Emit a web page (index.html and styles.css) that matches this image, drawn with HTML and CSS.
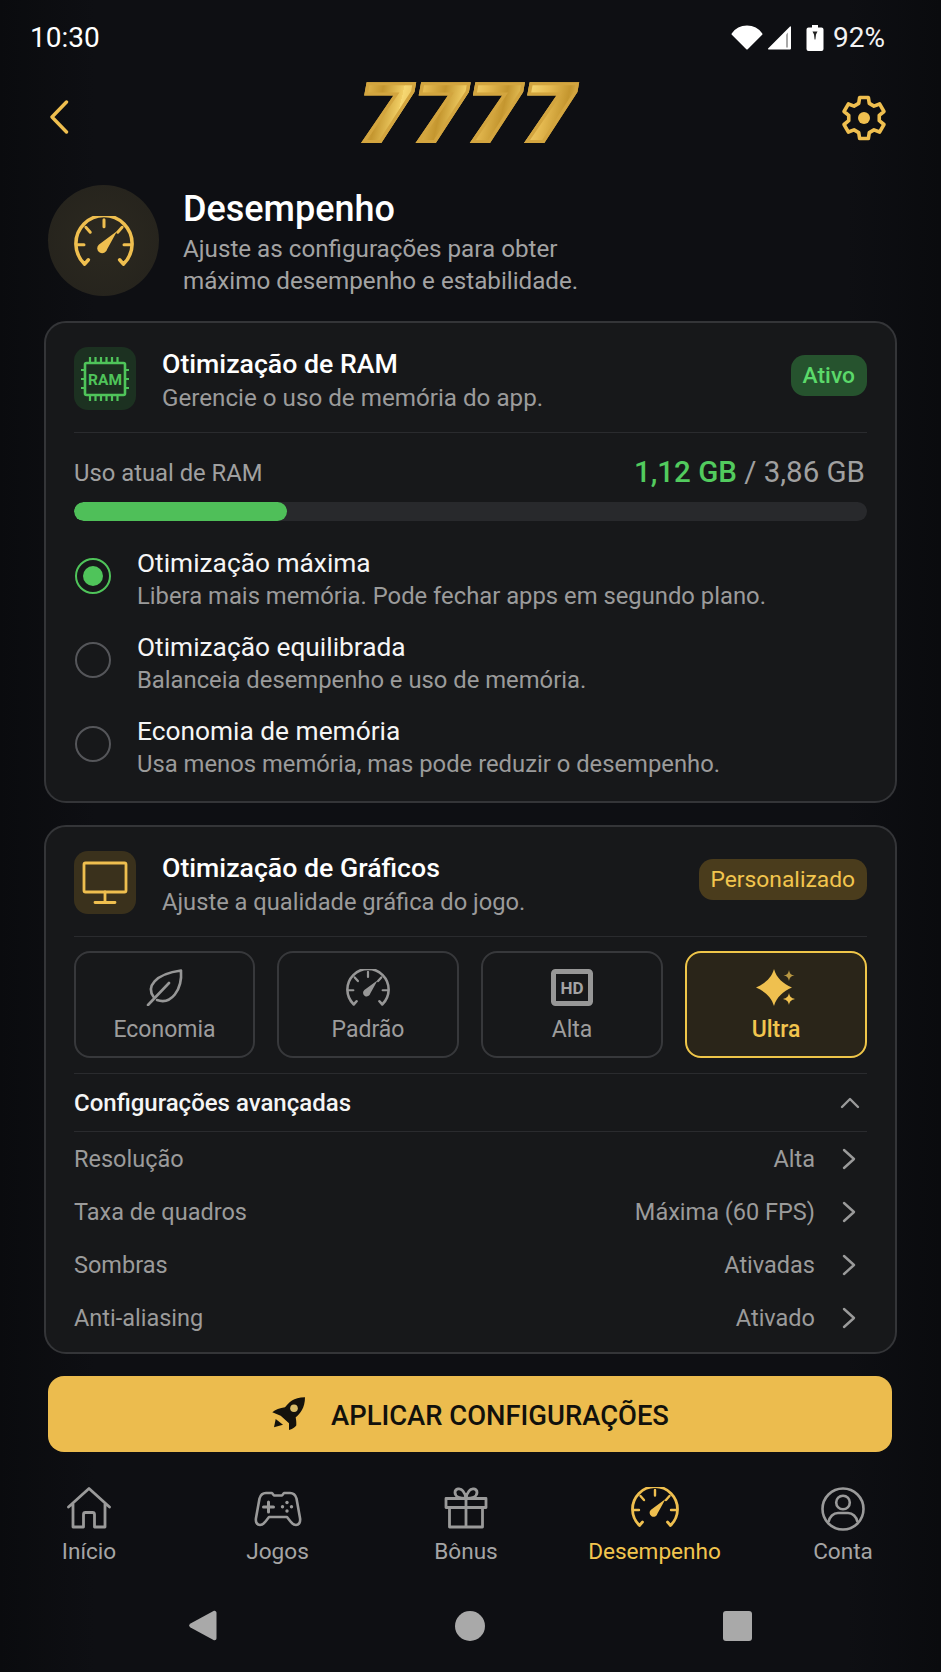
FILE: index.html
```html
<!DOCTYPE html>
<html lang="pt">
<head>
<meta charset="utf-8">
<title>Desempenho</title>
<link rel="stylesheet" href="styles.css">
</head>
<body>
<svg class="defs" width="0" height="0" aria-hidden="true">
  <defs>
    <symbol id="gauge" viewBox="0 0 48 40">
      <path d="M8.5 38.5 11.5 35M39.5 38.5 36.5 35M8.5 38.5A22.5 22.5 0 1 1 39.5 38.5" fill="none" stroke="currentColor" stroke-width="2.8" stroke-linecap="round" stroke-linejoin="round"/>
      <path d="M24 3v5.500M2.500 23H8M40 23h5.500M9.500 9l3.500 4M38.500 9 35 13" fill="none" stroke="currentColor" stroke-width="2.400" stroke-linecap="round"/>
      <path d="M34.500 12 26.500 26.500a4 4 0 1 1-6.500-3.800z" fill="currentColor"/>
    </symbol>
    <symbol id="chev" viewBox="0 0 16 22">
      <path d="M3 2l10 9-10 9" fill="none" stroke="currentColor" stroke-width="2.400" stroke-linecap="round" stroke-linejoin="round"/>
    </symbol>
  </defs>
</svg>
<main class="page">
  <header class="status">
    <span class="time">10:30</span>
    <div class="status-right">
      <svg class="i-wifi" viewBox="0 0 32 25"><path d="M1.500 9C5 4 10 1.500 16 1.500S27 4 30.500 9L16 23.500z" fill="#fff" stroke="#fff" stroke-width="2" stroke-linejoin="round"/></svg>
      <svg class="i-signal" viewBox="0 0 24 25"><path d="M23 1.500a.6.6 0 0 1 1 .5v21.500a1 1 0 0 1-1 1H1.500a.6.6 0 0 1-.4-1z" fill="#fff"/><path d="M19 9.500l2-2v15h-2z" fill="#a8a8a8"/></svg>
      <svg class="i-batt" viewBox="0 0 18 26"><path d="M6 0h6v2.500h3.500A2 2 0 0 1 17.500 4.500V24a2 2 0 0 1-2 2h-13a2 2 0 0 1-2-2V4.500a2 2 0 0 1 2-2H6z" fill="#fff"/><path d="M6.500 6.500h5L10 9.500l-.6 5h-.8L8 9.500z" fill="#222"/></svg>
      <span class="pct">92%</span>
    </div>
  </header>

  <div class="topbar">
    <svg class="i-back" viewBox="0 0 20 34"><path d="M17.500 2 3 17l14.500 15" fill="none" stroke="currentColor" stroke-width="3.400" stroke-linecap="round" stroke-linejoin="round"/></svg>
    <span class="logo">7777</span>
    <svg class="i-gear" viewBox="0 0 48 48"><path d="M19.630 3.460H28.370L29.300 9.430 33.960 12.130 39.600 9.950 43.970 17.510 39.260 21.310V26.690L43.970 30.490 39.600 38.050 33.960 35.870 29.300 38.570 28.370 44.540H19.630L18.700 38.570 14.040 35.870 8.400 38.050 4.030 30.490 8.740 26.690V21.310L4.030 17.510 8.400 9.950 14.040 12.130 18.700 9.430z" fill="none" stroke="currentColor" stroke-width="3.600" stroke-linejoin="round"/><circle cx="24" cy="24" r="6" fill="currentColor"/></svg>
  </div>

  <section class="hero">
    <div class="hero-icon"><svg class="i-hero"><use href="#gauge"/></svg></div>
    <div class="hero-text">
      <h1>Desempenho</h1>
      <p>Ajuste as configurações para obter<br>máximo desempenho e estabilidade.</p>
    </div>
  </section>

  <section class="card card-ram">
    <div class="card-head">
      <div class="tile tile-green">
        <svg class="i-ram" viewBox="0 0 50 50">
          <rect x="5" y="9" width="40" height="32" rx="1.500" fill="#1c2f20" stroke="currentColor" stroke-width="2.600"/>
          <path d="M10 9V3M15.500 9V3M21 9V3M26.500 9V3M32 9V3M37.500 9V3M10 47v-6M15.500 47v-6M21 47v-6M26.500 47v-6M32 47v-6M37.500 47v-6M5 16H1M5 25H1M5 34H1M49 16h-4M49 25h-4M49 34h-4" stroke="currentColor" stroke-width="2.200" fill="none"/>
          <text x="25" y="31" text-anchor="middle" class="ram-text">RAM</text>
        </svg>
      </div>
      <div class="head-text">
        <h2>Otimização de RAM</h2>
        <p>Gerencie o uso de memória do app.</p>
      </div>
      <span class="badge badge-green">Ativo</span>
    </div>
    <div class="divider"></div>
    <div class="usage">
      <span class="usage-label">Uso atual de RAM</span>
      <span class="usage-val"><b>1,12 GB</b> / 3,86 GB</span>
    </div>
    <div class="bar"><div class="bar-fill"></div></div>
    <div class="options">
      <div class="option">
        <span class="radio radio-on"><span class="radio-dot"></span></span>
        <div><h3>Otimização máxima</h3><p>Libera mais memória. Pode fechar apps em segundo plano.</p></div>
      </div>
      <div class="option">
        <span class="radio"></span>
        <div><h3>Otimização equilibrada</h3><p>Balanceia desempenho e uso de memória.</p></div>
      </div>
      <div class="option">
        <span class="radio"></span>
        <div><h3>Economia de memória</h3><p>Usa menos memória, mas pode reduzir o desempenho.</p></div>
      </div>
    </div>
  </section>

  <section class="card card-gfx">
    <div class="card-head">
      <div class="tile tile-gold">
        <svg class="i-monitor" viewBox="0 0 46 44"><rect x="2" y="2" width="42" height="29" rx="1.500" fill="none" stroke="currentColor" stroke-width="2.800"/><path d="M23 31v9M13 41.500h20" fill="none" stroke="currentColor" stroke-width="2.800" stroke-linecap="round"/></svg>
      </div>
      <div class="head-text">
        <h2>Otimização de Gráficos</h2>
        <p>Ajuste a qualidade gráfica do jogo.</p>
      </div>
      <span class="badge badge-gold">Personalizado</span>
    </div>
    <div class="divider"></div>
    <div class="modes">
      <div class="mode">
        <svg class="i-mode" viewBox="0 0 44 37"><path d="M11 28.500C2.500 18 12 5 38 1.500 39.500 21 28 36 14 31" fill="none" stroke="currentColor" stroke-width="2.600" stroke-linejoin="round" stroke-linecap="round"/><path d="M5 36 26 14" fill="none" stroke="currentColor" stroke-width="2.600" stroke-linecap="round"/></svg>
        <span>Economia</span>
      </div>
      <div class="mode">
        <svg class="i-mode"><use href="#gauge"/></svg>
        <span>Padrão</span>
      </div>
      <div class="mode">
        <svg class="i-mode" viewBox="0 0 44 37"><rect x="3.500" y="2.500" width="37" height="32" rx="2" fill="none" stroke="currentColor" stroke-width="5"/><text x="22" y="24.500" text-anchor="middle" class="hd-text">HD</text></svg>
        <span>Alta</span>
      </div>
      <div class="mode mode-on">
        <svg class="i-mode" viewBox="-2 0 44 37"><path d="M18 0C20.500 9 27 14.500 36 18.500 27 22.500 20.500 28 18 37 15.500 28 9 22.500 0 18.500 9 14.500 15.500 9 18 0z" fill="currentColor"/><path d="M33 1c.7 3.500 2 5 5.500 5.500C35 7 33.700 8.500 33 12c-.7-3.500-2-5-5.500-5.500C31 6 32.300 4.500 33 1z" fill="#b89742"/><path d="M33 24c.7 3.500 2 5 6 6-4 1-5.300 2.500-6 6-.7-3.500-2-5-6-6 4-1 5.300-2.500 6-6z" fill="currentColor"/></svg>
        <span>Ultra</span>
      </div>
    </div>
    <div class="divider divider-modes"></div>
    <div class="adv-head">
      <span>Configurações avançadas</span>
      <svg class="i-up" viewBox="0 0 20 12"><path d="M2 10l8-8 8 8" fill="none" stroke="currentColor" stroke-width="2.400" stroke-linecap="round" stroke-linejoin="round"/></svg>
    </div>
    <div class="divider divider-adv"></div>
    <div class="row"><span class="row-key">Resolução</span><span class="row-val">Alta</span><svg class="i-chev"><use href="#chev"/></svg></div>
    <div class="row"><span class="row-key">Taxa de quadros</span><span class="row-val">Máxima (60 FPS)</span><svg class="i-chev"><use href="#chev"/></svg></div>
    <div class="row"><span class="row-key">Sombras</span><span class="row-val">Ativadas</span><svg class="i-chev"><use href="#chev"/></svg></div>
    <div class="row"><span class="row-key">Anti-aliasing</span><span class="row-val">Ativado</span><svg class="i-chev"><use href="#chev"/></svg></div>
  </section>

  <button class="apply">
    <svg class="i-rocket" viewBox="0 0 36 36">
      <path d="M34 1.300C28 1.500 24 2.500 21 4.500 18 6.500 16 9 14 11.300 9 12 4 13.500 1.300 16.300L9.700 19.700 18 27.300V34C22 33 25.500 30 25.300 29 25.500 26 25 23.500 24.700 21.300 29 18 34 12 34 1.300z" fill="#14120c"/>
      <circle cx="23" cy="12.300" r="3.800" fill="#d8bc68"/>
      <path d="M4.700 23 12 28.700 3 31.300z" fill="#14120c"/>
    </svg>
    <span>APLICAR CONFIGURAÇÕES</span>
  </button>

  <nav class="tabs">
    <div class="tab">
      <div class="tab-icon"><svg class="i-home" viewBox="0 0 44 42"><path d="M1.500 20 22 1.500 42.500 20M6 17v23h10.500V27.500a2 2 0 0 1 2-2h7a2 2 0 0 1 2 2V40H38V17" fill="none" stroke="currentColor" stroke-width="2.800" stroke-linejoin="round" stroke-linecap="round"/></svg></div>
      <span>Início</span>
    </div>
    <div class="tab">
      <div class="tab-icon"><svg class="i-pad" viewBox="0 0 48 36"><path d="M12 2h6l2 2.500h8L30 2h6c3.500 0 5.500 2 6.500 5.500L46 27c.7 4-1 7-4 7-2.500 0-4-1.500-5.500-3.500L33 26H15l-3.500 4.500C10 32.500 8.500 34 6 34c-3 0-4.700-3-4-7L5.500 7.500C6.500 4 8.500 2 12 2z" fill="none" stroke="currentColor" stroke-width="2.600" stroke-linejoin="round"/><path d="M14.500 11v10M9.500 16h10" stroke="currentColor" stroke-width="3" stroke-linecap="round"/><circle cx="33" cy="11.500" r="1.700" fill="currentColor"/><circle cx="33" cy="20" r="1.700" fill="currentColor"/><circle cx="28.500" cy="15.700" r="1.700" fill="currentColor"/><circle cx="37.500" cy="15.700" r="1.700" fill="currentColor"/></svg></div>
      <span>Jogos</span>
    </div>
    <div class="tab">
      <div class="tab-icon"><svg class="i-gift" viewBox="0 0 44 42"><path d="M2 11.500h40v9H2zM5.500 20.500V40h33V20.500M22 11.500V40M22 11.500C16 11.500 11 9.500 11 5.500c0-4 5.500-5 8 -1.500 1.500 2 3 5 3 7.500zM22 11.500c6 0 11-2 11-6 0-4-5.500-5-8-1.500-1.500 2-3 5-3 7.500z" fill="none" stroke="currentColor" stroke-width="2.800" stroke-linejoin="round"/></svg></div>
      <span>Bônus</span>
    </div>
    <div class="tab tab-on">
      <div class="tab-icon"><svg class="i-gauge-tab"><use href="#gauge"/></svg></div>
      <span>Desempenho</span>
    </div>
    <div class="tab">
      <div class="tab-icon"><svg class="i-user" viewBox="0 0 44 44"><circle cx="22" cy="22" r="20.500" fill="none" stroke="currentColor" stroke-width="2.600"/><circle cx="22" cy="15.500" r="6.800" fill="none" stroke="currentColor" stroke-width="2.600"/><path d="M7.500 35c1-5.500 5-9 9.500-9h10c4.500 0 8.500 3.500 9.500 9" fill="none" stroke="currentColor" stroke-width="2.600"/></svg></div>
      <span>Conta</span>
    </div>
  </nav>

  <div class="sysnav">
    <svg class="i-sys-back" viewBox="0 0 28 31"><path d="M1.500 13.500 24.500 1c1.500-.8 3 .2 3 2v25c0 1.800-1.500 2.800-3 2L1.500 17.500c-1.800-1-1.800-3 0-4z" fill="#a9a9a9"/></svg>
    <span class="sys-circle"></span>
    <span class="sys-square"></span>
  </div>
</main>
</body>
</html>
```

FILE: styles.css
```css
* { box-sizing: border-box; }
html, body { margin: 0; padding: 0; background: #0d0e12; }
body { font-family: Roboto, "Liberation Sans", sans-serif; color: #fff; }
h1, h2, h3, p { margin: 0; font-weight: inherit; }
.defs { display: block; height: 0; }
svg { display: block; flex: none; }

.page {
  width: 941px;
  height: 1672px;
  overflow: hidden;
  display: flex;
  flex-direction: column;
  background: linear-gradient(90deg, #0a0b0e 0, #0e0f13 10%, #0e0f13 90%, #0a0b0e 100%);
}

/* status bar */
.status { height: 74px; flex: none; display: flex; align-items: center; justify-content: space-between; padding: 1px 56px 0 30px; }
.time { font-size: 28px; color: #fff; }
.status-right { display: flex; align-items: center; }
.i-wifi { width: 32px; height: 25px; }
.i-signal { width: 24px; height: 25px; margin-left: 4px; }
.i-batt { width: 18px; height: 26px; margin-left: 15px; }
.pct { font-size: 28px; margin-left: 9px; color: #f2f2f2; }

/* top bar */
.topbar { height: 76px; flex: none; display: flex; align-items: center; padding: 0 53px 0 49px; color: #efbf4f; }
.i-back { width: 20px; height: 34px; margin-top: 10px; }
.i-gear { width: 48px; height: 48px; margin-top: 12px; }
.logo {
  flex: 1;
  text-align: center;
  font-size: 82px;
  line-height: 78px;
  font-weight: 900;
  font-style: italic;
  letter-spacing: 2px;
  transform: translate(14px, 2px) scaleX(1.13);
  background: repeating-linear-gradient(102deg, #f6d873 0, #e6bb52 18px, #c4962f 36px, #f0cd64 54px);
  -webkit-background-clip: text;
  background-clip: text;
  color: transparent;
  -webkit-text-stroke: 3px #d3a53f;
}

/* hero */
.hero { flex: none; height: 111px; margin-top: 35px; padding-left: 48px; display: flex; align-items: center; gap: 24px; }
.hero-icon { width: 111px; height: 111px; border-radius: 50%; background: radial-gradient(circle, #2c2920 0, #24221c 100%); display: flex; align-items: center; justify-content: center; }
.i-hero { width: 60px; height: 50px; color: #efbf4f; }
h1 { font-size: 36px; line-height: 42px; font-weight: 500; color: #fff; margin-top: 3px; }
.hero-text p { font-size: 24.200px; line-height: 32px; color: #a3a3a3; margin-top: 3px; }

/* cards */
.card { flex: none; margin: 0 44px; background: #17181a; border: 2px solid #343538; border-radius: 22px; padding: 24px 28px 0; }
.card-ram { margin-top: 25px; height: 482px; }
.card-gfx { margin-top: 22px; height: 529px; }
.card-head { height: 63px; display: flex; align-items: flex-start; }
.tile { width: 62px; height: 63px; border-radius: 14px; display: flex; align-items: center; justify-content: center; flex: none; }
.tile-green { background: #1c3121; color: #4fc45a; }
.tile-gold { background: #3a311c; color: #efbf4f; }
.i-ram { width: 50px; height: 50px; }
.ram-text { font-family: Roboto, sans-serif; font-size: 15.500px; font-weight: 700; fill: #4fc45a; }
.i-monitor { width: 46px; height: 44px; }
.head-text { flex: 1; margin-left: 26px; }
h2 { font-size: 26.700px; line-height: 32px; font-weight: 500; color: #fff; margin-top: 1px; }
.head-text p { font-size: 24.200px; line-height: 36px; color: #9b9b9b; }
.card-gfx .head-text p { font-size: 23.700px; }
.badge { height: 41px; display: flex; align-items: center; padding: 0 12px; border-radius: 14px; font-size: 22.800px; margin-top: 8px; }
.badge-green { background: #26532e; color: #5bd96a; font-weight: 500; }
.badge-gold { background: #4a3c1c; color: #f2c54e; }
.divider { height: 1px; background: #2a2b2e; margin-top: 22px; }
.divider-adv { margin-top: 0; }

/* usage */
.usage { height: 34px; margin-top: 22px; display: flex; align-items: center; justify-content: space-between; }
.usage-label { font-size: 23.800px; color: #a0a0a0; padding-top: 1px; }
.usage-val { font-size: 29.500px; color: #a0a0a0; padding-right: 2px; }
.usage-val b { font-weight: 500; color: #52cb5e; }
.bar { height: 19px; margin-top: 13px; border-radius: 10px; background: #28292c; overflow: hidden; }
.bar-fill { width: 213px; height: 100%; border-radius: 10px; background: #4fbf59; }

/* options */
.options { margin-top: 26px; }
.option { height: 84px; display: flex; align-items: flex-start; gap: 26px; }
.option h3 { font-size: 26.300px; line-height: 33px; color: #f5f5f5; }
.option p { font-size: 23.800px; line-height: 33px; color: #9b9b9b; }
.radio { flex: none; width: 36px; height: 36px; margin-top: 11px; margin-left: 1px; border-radius: 50%; border: 2.500px solid #55565a; display: flex; align-items: center; justify-content: center; }
.radio-on { border-color: #4fc45a; }
.radio-dot { width: 20px; height: 20px; border-radius: 50%; background: #4fc45a; }

/* modes */
.modes { margin-top: 14px; height: 107px; display: grid; grid-template-columns: 181px 182px 182px 182px; gap: 22px; }
.mode { border: 2px solid #37383b; border-radius: 16px; display: flex; flex-direction: column; align-items: center; color: #979797; padding-top: 16px; }
.mode span { font-size: 23px; line-height: 28px; margin-top: 10px; color: #9d9d9d; }
.i-mode { width: 44px; height: 37px; }
.mode-on { border-color: #efc649; background: #2a2519; color: #efc04f; }
.mode-on span { color: #f2c54e; font-weight: 500; }
.hd-text { font-family: Roboto, sans-serif; font-size: 17px; font-weight: 700; fill: #a3a3a3; }
.divider-modes { margin-top: 15px; }

/* advanced */
.adv-head { height: 57px; display: flex; align-items: center; justify-content: space-between; font-size: 24px; font-weight: 500; color: #f5f5f5; padding-right: 7px; }
.i-up { width: 20px; height: 12px; color: #9a9a9a; }
.row { height: 53px; display: flex; align-items: center; font-size: 23.500px; color: #9b9b9b; }
.row-key { flex: 1; }
.i-chev { width: 16px; height: 22px; margin-left: 26px; margin-right: 10px; color: #9a9a9a; }

/* apply */
.apply { flex: none; margin: 22px 49px 0 48px; height: 76px; border: 0; border-radius: 16px; background: #ecbc4e; display: flex; align-items: center; justify-content: center; gap: 24px; font-family: inherit; font-size: 27.400px; font-weight: 500; color: #12110c; padding: 0; }
.apply span { padding-top: 3px; }
.i-rocket { width: 36px; height: 36px; }

/* tabs */
.tabs { flex: none; margin-top: 35px; padding: 0 23px 0 14px; display: flex; justify-content: space-between; }
.tab { width: 150px; display: flex; flex-direction: column; align-items: center; color: #9a9a9a; }
.tab-icon { height: 45px; display: flex; align-items: flex-start; }
.tab span { font-size: 22.600px; line-height: 40px; color: #a5a5a5; }
.tab-on { color: #efbf4f; }
.tab-on span { color: #f2c54e; }
.i-home { width: 44px; height: 42px; }
.i-pad { width: 48px; height: 36px; margin-top: 4px; }
.i-gift { width: 44px; height: 42px; }
.i-gauge-tab { width: 48px; height: 40px; }
.i-user { width: 44px; height: 44px; }

/* android nav */
.sysnav { flex: none; margin-top: 38px; padding-left: 189px; display: flex; align-items: center; gap: 238px; }
.i-sys-back { width: 28px; height: 31px; }
.sys-circle { width: 30px; height: 30px; border-radius: 50%; background: #a9a9a9; }
.sys-square { width: 29px; height: 30px; border-radius: 3px; background: #a9a9a9; }
```
